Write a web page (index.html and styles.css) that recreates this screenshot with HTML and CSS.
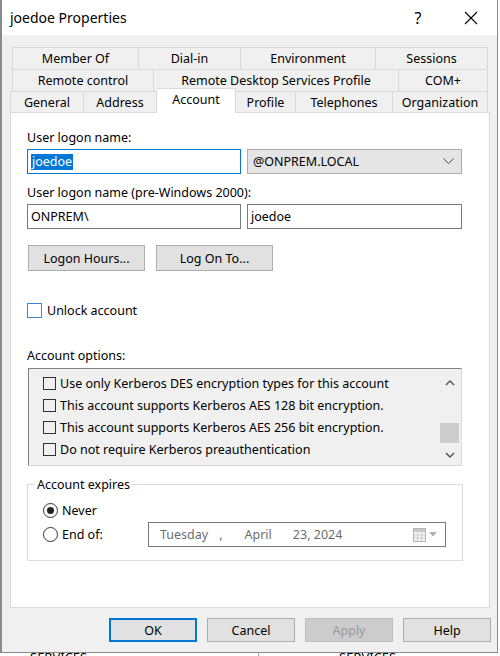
FILE: index.html
```html
<!DOCTYPE html>
<html>
<head>
<meta charset="utf-8">
<title>joedoe Properties</title>
<link rel="stylesheet" href="styles.css">
</head>
<body>
<div class="window">
  <div class="titlebar">
    <span class="title">joedoe Properties</span>
    <span class="tb-btn help">?</span>
    <span class="tb-btn close"><svg width="14" height="14" viewBox="0 0 14 14"><path d="M1 1L13 13M13 1L1 13" stroke="#000" stroke-width="1.1" fill="none"/></svg></span>
  </div>
  <div class="client">
    <div class="tabs">
      <div class="tabrow r1">
        <div class="tab t-member">Member Of</div>
        <div class="tab t-dial">Dial-in</div>
        <div class="tab t-env">Environment</div>
        <div class="tab t-sess">Sessions</div>
      </div>
      <div class="tabrow r2">
        <div class="tab t-remote">Remote control</div>
        <div class="tab t-rdsp">Remote Desktop Services Profile</div>
        <div class="tab t-com">COM+</div>
      </div>
      <div class="tabrow r3">
        <div class="tab t-general">General</div>
        <div class="tab t-address">Address</div>
        <div class="tab t-account selected">Account</div>
        <div class="tab t-profile">Profile</div>
        <div class="tab t-tel">Telephones</div>
        <div class="tab t-org">Organization</div>
      </div>
    </div>
    <div class="panel">
      <div class="lbl l1">User logon name:</div>
      <div class="row r-top">
        <div class="input focus"><span class="sel">joedoe</span></div>
        <div class="combo"><span>@ONPREM.LOCAL</span><svg width="11" height="7" viewBox="0 0 11 7"><polyline points="0.5,0.5 5.5,5.5 10.5,0.5" fill="none" stroke="#444" stroke-width="1"/></svg></div>
      </div>
      <div class="lbl l2">User logon name (pre-Windows 2000):</div>
      <div class="row r-top2">
        <div class="input">ONPREM\</div>
        <div class="input wide">joedoe</div>
      </div>
      <div class="btnrow">
        <div class="btn big">Logon Hours...</div>
        <div class="btn big">Log On To...</div>
      </div>
      <div class="unlock">
        <span class="cb blue"></span><span>Unlock account</span>
      </div>
      <div class="lbl l3">Account options:</div>
      <div class="listbox">
        <div class="items">
          <div class="item"><span class="cb small"></span><span>Use only Kerberos DES encryption types for this account</span></div>
          <div class="item"><span class="cb small"></span><span>This account supports Kerberos AES 128 bit encryption.</span></div>
          <div class="item"><span class="cb small"></span><span>This account supports Kerberos AES 256 bit encryption.</span></div>
          <div class="item"><span class="cb small"></span><span>Do not require Kerberos preauthentication</span></div>
        </div>
        <div class="scrollbar">
          <div class="sb-arrow up"><svg width="10" height="6" viewBox="0 0 10 6"><polyline points="1,5 5,1 9,5" fill="none" stroke="#505050" stroke-width="1.4"/></svg></div>
          <div class="sb-track"><div class="sb-thumb"></div></div>
          <div class="sb-arrow down"><svg width="10" height="6" viewBox="0 0 10 6"><polyline points="1,1 5,5 9,1" fill="none" stroke="#505050" stroke-width="1.4"/></svg></div>
        </div>
      </div>
      <fieldset class="group">
        <legend>Account expires</legend>
        <div class="radiorow first">
          <span class="radio checked"></span><span class="rlabel">Never</span>
        </div>
        <div class="radiorow second">
          <span class="radio"></span><span class="rlabel endof">End of:</span>
          <div class="datepick">
            <span class="d-day">Tuesday</span>
            <span class="d-comma">,</span>
            <span class="d-month">April</span>
            <span class="d-date">23, 2024</span>
            <span class="d-icons">
              <svg width="13" height="14" viewBox="0 0 13 14"><rect x="0.5" y="0.5" width="12" height="13" fill="#f4f4f4" stroke="#b4b4b4"/><rect x="1" y="1" width="11" height="3" fill="#c8c8c8"/><path d="M1 7H12M1 10H12M4.5 4V13M8.5 4V13" stroke="#d0d0d0" stroke-width="1"/></svg>
              <svg width="8" height="5" viewBox="0 0 8 5"><polygon points="0,0 8,0 4,4.5" fill="#b0b0b0"/></svg>
            </span>
          </div>
        </div>
      </fieldset>
    </div>
    <div class="footer">
      <div class="btn foot default">OK</div>
      <div class="btn foot">Cancel</div>
      <div class="btn foot disabled">Apply</div>
      <div class="btn foot">Help</div>
    </div>
  </div>
</div>
<div class="under">
  <span class="u1">SERVICES</span>
  <span class="u-line"></span>
  <span class="u2">SERVICES</span>
</div>
</body>
</html>
```

FILE: styles.css
```css
* { box-sizing: border-box; }
html, body { margin: 0; padding: 0; background: #fff; }
body {
  width: 500px;
  height: 656px;
  overflow: hidden;
  font-family: "Noto Sans", "Liberation Sans", sans-serif;
  font-size: 12.5px;
  color: #000;
}
.window {
  width: 498px;
  height: 653px;
  border-left: 2px solid #8a8a8a;
  border-right: 1px solid #8a8a8a;
  border-bottom: 1px solid #8a8a8a;
  display: flex;
  flex-direction: column;
}
.titlebar {
  height: 35px;
  flex: none;
  background: #fff;
  display: flex;
  align-items: center;
}
.title { font-size: 14px; margin-left: 8px; flex: 1; }
.tb-btn {
  width: 54px;
  height: 35px;
  display: flex;
  align-items: center;
  justify-content: center;
}
.help { font-size: 16px; }
.close { width: 52px; }
.client {
  flex: 1;
  background: #f0f0f0;
  padding-top: 12px;
}
/* tabs */
.tabrow { display: flex; margin-left: 10px; height: 22px; }
.tabrow.r3 { margin-left: 8px; height: 21px; }
.tab {
  height: 22px;
  background: #f0f0f0;
  border-top: 1px solid #d9d9d9;
  border-right: 1px solid #d9d9d9;
  display: flex;
  align-items: center;
  justify-content: center;
  white-space: nowrap;
  flex: none;
}
.r3 .tab { height: 21px; }
.tab:first-child { border-left: 1px solid #d9d9d9; }
.t-member { width: 127px; }
.t-dial { width: 102px; }
.t-env { width: 135px; }
.t-sess { width: 112px; }
.t-remote { width: 142px; }
.t-rdsp { width: 245px; }
.t-com { width: 89px; }
.t-general { width: 74px; }
.t-address { width: 73px; }
.t-account { width: 79px; }
.t-profile { width: 60px; }
.t-tel { width: 97px; }
.t-org { width: 95px; }
.r3 .tab.selected {
  background: #fff;
  height: 25px;
  margin-top: -3px;
  position: relative;
  z-index: 2;
  align-items: flex-start;
  padding-top: 2px;
}
/* panel */
.panel {
  margin-left: 8px;
  width: 480px;
  height: 496px;
  background: #fff;
  border: 1px solid #d9d9d9;
  padding: 0 27px 0 16px;
}
.lbl { height: 17px; line-height: 17px; white-space: nowrap; }
.l1 { margin-top: 16px; }
.l2 { margin-top: 10px; }
.l3 { margin-top: 28px; }
.row { display: flex; gap: 6px; height: 25px; margin-top: 3px; }
.input {
  width: 214px;
  height: 25px;
  border: 1px solid #7a7a7a;
  background: #fff;
  padding-left: 3px;
  display: flex;
  align-items: center;
}
.input.wide { width: 215px; }
.input.focus { border-color: #0078d7; }
.sel { background: #0078d7; color: #fff; line-height: 16px; padding: 0 1px; }
.combo {
  width: 215px;
  height: 25px;
  border: 1px solid #adadad;
  background: #e5e5e5;
  display: flex;
  align-items: center;
  justify-content: space-between;
  padding: 0 7px 0 5px;
}
.btnrow { display: flex; gap: 11px; margin-top: 16px; margin-left: 1px; }
.btn {
  background: #e1e1e1;
  border: 1px solid #adadad;
  display: flex;
  align-items: center;
  justify-content: center;
  white-space: nowrap;
}
.btn.big { width: 117px; height: 26px; }
.unlock {
  margin-top: 31px;
  height: 17px;
  display: flex;
  align-items: center;
  gap: 5px;
}
.cb {
  display: inline-block;
  flex: none;
  border: 1px solid #333;
}
.cb.blue { width: 15px; height: 15px; border-color: #3c86d8; background: #fff; }
.cb.small { width: 13px; height: 13px; }
/* listbox */
.listbox {
  margin-top: 4px;
  margin-left: 1px;
  width: 434px;
  height: 98px;
  background: #f0f0f0;
  border-top: 1px solid #828282;
  border-left: 1px solid #828282;
  border-right: 1px solid #dadada;
  border-bottom: 1px solid #dadada;
  display: flex;
}
.items { flex: 1; padding-top: 3px; padding-left: 14px; }
.item {
  height: 22px;
  display: flex;
  align-items: center;
  gap: 4px;
  white-space: nowrap;
}
.scrollbar {
  width: 19px;
  margin-right: 2px;
  display: flex;
  flex-direction: column;
}
.sb-arrow { display: flex; justify-content: center; align-items: center; }
.sb-arrow.up { height: 28px; }
.sb-track { height: 48px; padding-top: 26px; }
.sb-thumb { height: 20px; background: #cdcdcd; }
.sb-arrow.down { height: 20px; }
/* group box */
.group {
  margin: 10px 0 0 0;
  padding: 0 0 13px 15px;
  width: 436px;
  border: 1px solid #dcdcdc;
}
.group legend {
  margin-left: -8px;
  padding: 0 2px;
  line-height: 17px;
}
.radiorow { display: flex; align-items: center; }
.radiorow.first { margin-top: 8px; height: 18px; }
.radiorow.second { margin-top: 3px; height: 25px; }
.radio {
  width: 15px;
  height: 15px;
  border: 1px solid #333;
  border-radius: 50%;
  background: #fff;
  flex: none;
  display: flex;
  align-items: center;
  justify-content: center;
}
.radio.checked::after {
  content: "";
  width: 7px;
  height: 7px;
  border-radius: 50%;
  background: #222;
}
.rlabel { margin-left: 4px; }
.rlabel.endof { width: 86px; }
.datepick {
  width: 298px;
  height: 25px;
  border: 1px solid #7a7a7a;
  background: #fff;
  color: #6d6d6d;
  display: flex;
  align-items: center;
  padding-left: 11px;
  white-space: nowrap;
}
.d-comma { margin-left: 11px; }
.d-month { margin-left: 22px; }
.d-date { margin-left: 21px; }
.d-icons { margin-left: auto; margin-right: 8px; display: flex; align-items: center; gap: 3px; }
/* footer */
.footer {
  display: flex;
  justify-content: flex-end;
  gap: 10px;
  margin-top: 10px;
  padding-right: 6px;
}
.btn.foot { width: 88px; height: 24px; }
.btn.default { border: 2px solid #0078d7; }
.btn.disabled { background: #cccccc; border-color: #bfbfbf; color: #9a9a9a; }
/* under strip */
.under {
  height: 3px;
  overflow: hidden;
  display: flex;
  font-size: 13px;
  line-height: 14px;
}
.under span { display: block; }
.u1 { margin-left: 30px; margin-top: -3px; width: 220px; }
.u-line { width: 1px; height: 3px; background: #aaa; margin-left: 8px; }
.u2 { margin-left: 80px; margin-top: -3px; }
```
